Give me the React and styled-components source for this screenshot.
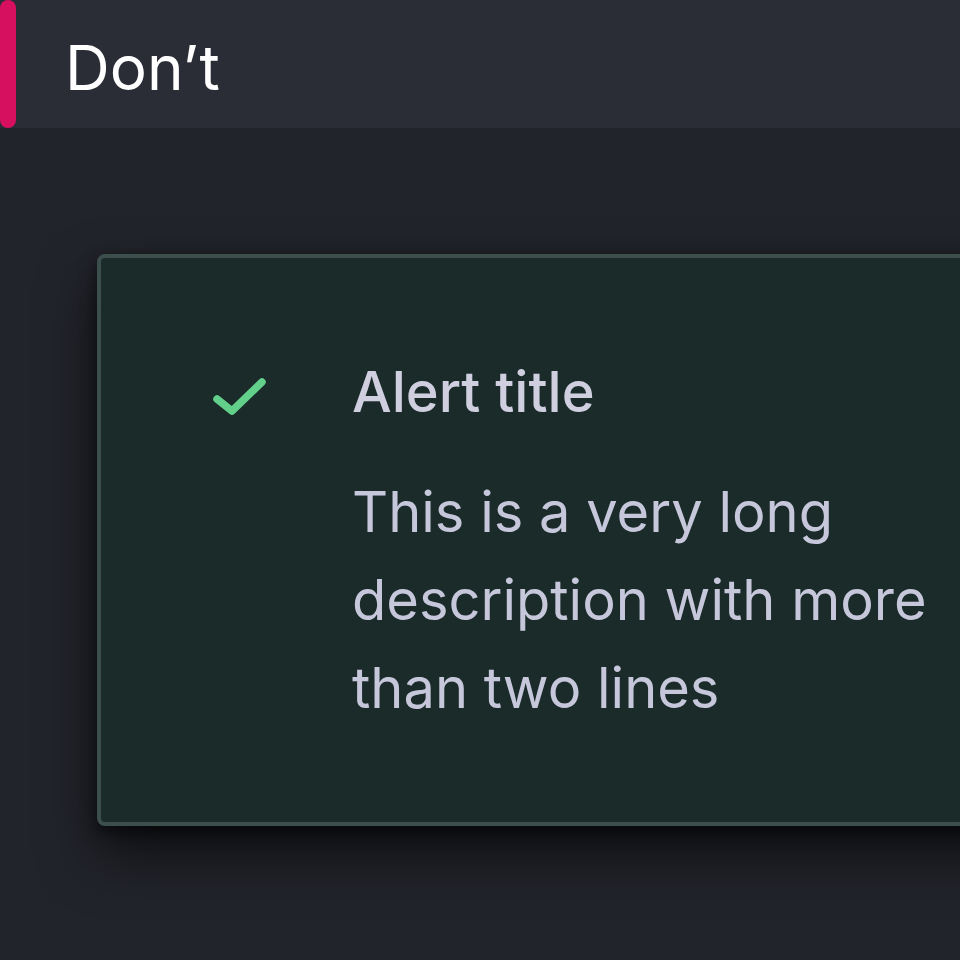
import React from "react";
import styled, { createGlobalStyle } from "styled-components";

const Global = createGlobalStyle`
  html, body { margin: 0; padding: 0; background: #22242b; }
  body { font-family: Inter, "Noto Sans", sans-serif; overflow: hidden; }
`;

const Page = styled.div`
  width: 960px;
  height: 960px;
  background: #22242b;
  overflow: hidden;
  display: flex;
  flex-direction: column;
`;

const Header = styled.div`
  height: 128px;
  background: #2a2d35;
  display: flex;
  align-items: center;
  gap: 49px;
  flex-shrink: 0;
`;

const Accent = styled.div`
  width: 16px;
  align-self: stretch;
  background: #d60f5e;
  border-radius: 8px;
`;

const HeaderTitle = styled.h1`
  margin: 0;
  font-size: 62px;
  font-weight: 400;
  color: #ffffff;
  line-height: 1;
  padding-top: 8px;
`;

const Stage = styled.div`
  padding: 126px 0 0 97px;
`;

const Alert = styled.div`
  width: 1000px;
  box-sizing: border-box;
  background: #1a2b2a;
  border: 4px solid #3c4f4d;
  border-radius: 8px;
  box-shadow: 0 28px 56px rgba(0, 0, 0, 0.6), 0 6px 16px rgba(0, 0, 0, 0.55);
  padding: 90px 40px 90px 104px;
  display: flex;
  gap: 75px;
`;

const IconBox = styled.div`
  width: 72px;
  height: 88px;
  display: flex;
  align-items: center;
  justify-content: center;
  flex-shrink: 0;
`;

const Content = styled.div`
  display: flex;
  flex-direction: column;
  gap: 32px;
  max-width: 610px;
`;

const Title = styled.div`
  font-size: 56px;
  line-height: 88px;
  font-weight: 500;
  color: #cfcfe0;
`;

const Description = styled.div`
  font-size: 56px;
  line-height: 88px;
  font-weight: 400;
  color: #c6c7db;
`;

const Check = () => (
  <svg width="64" height="64" viewBox="0 0 64 64" fill="none">
    <path
      d="M8 39 L23 51 L53 22"
      stroke="#62d08a"
      strokeWidth="7.5"
      strokeLinecap="round"
      strokeLinejoin="round"
    />
  </svg>
);

export default function App() {
  return (
    <Page>
      <Global />
      <Header>
        <Accent />
        <HeaderTitle>Don’t</HeaderTitle>
      </Header>
      <Stage>
        <Alert>
          <IconBox>
            <Check />
          </IconBox>
          <Content>
            <Title>Alert title</Title>
            <Description>
              This is a very long description with more than two lines
            </Description>
          </Content>
        </Alert>
      </Stage>
    </Page>
  );
}
